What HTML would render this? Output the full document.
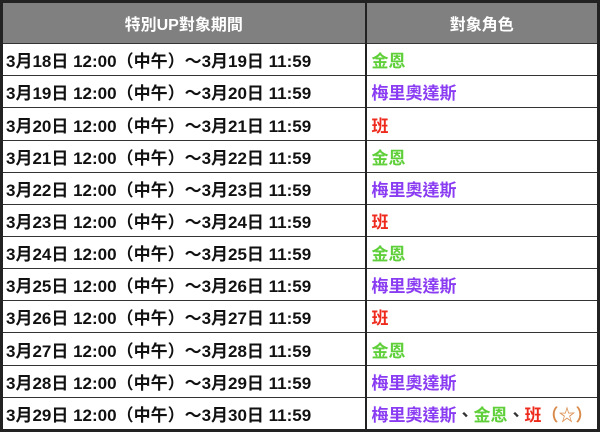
<!DOCTYPE html>
<html><head><meta charset="utf-8"><style>
html,body{margin:0;padding:0;background:#fff;}
table{position:absolute;left:0;top:0;width:600px;height:432px;border-collapse:collapse;border:3px solid #222;font-family:"Liberation Sans","Noto Sans CJK TC",sans-serif;font-weight:bold;font-size:17px;color:#111;table-layout:fixed;}
td,th{border:1px solid #333;padding:0 0 0 3px;text-align:left;white-space:nowrap;}
th{background:#808080;color:#fff;text-align:center;height:40px;font-size:16px;padding:0;}
th+th{border-left:2px solid #222;}
td+td{border-left:2px solid #222;padding-left:5px;}
tr.r td{height:31px;}
.g{color:#5fcf3a}.p{color:#8a3cf2}.r2{color:#ee2a1c}.o{color:#d98a4a}.k{color:#333}
</style></head><body>
<table>
<colgroup><col style="width:364px"><col></colgroup>
<tr><th>特別UP對象期間</th><th>對象角色</th></tr>
<tr class="r"><td>3月18日 12:00（中午）～3月19日 11:59</td><td class="g">金恩</td></tr>
<tr class="r"><td>3月19日 12:00（中午）～3月20日 11:59</td><td class="p">梅里奧達斯</td></tr>
<tr class="r"><td>3月20日 12:00（中午）～3月21日 11:59</td><td class="r2">班</td></tr>
<tr class="r"><td>3月21日 12:00（中午）～3月22日 11:59</td><td class="g">金恩</td></tr>
<tr class="r"><td>3月22日 12:00（中午）～3月23日 11:59</td><td class="p">梅里奧達斯</td></tr>
<tr class="r"><td>3月23日 12:00（中午）～3月24日 11:59</td><td class="r2">班</td></tr>
<tr class="r"><td>3月24日 12:00（中午）～3月25日 11:59</td><td class="g">金恩</td></tr>
<tr class="r"><td>3月25日 12:00（中午）～3月26日 11:59</td><td class="p">梅里奧達斯</td></tr>
<tr class="r"><td>3月26日 12:00（中午）～3月27日 11:59</td><td class="r2">班</td></tr>
<tr class="r"><td>3月27日 12:00（中午）～3月28日 11:59</td><td class="g">金恩</td></tr>
<tr class="r"><td>3月28日 12:00（中午）～3月29日 11:59</td><td class="p">梅里奧達斯</td></tr>
<tr class="r"><td>3月29日 12:00（中午）～3月30日 11:59</td><td><span class="p">梅里奧達斯</span><span class="k">、</span><span class="g">金恩</span><span class="k">、</span><span class="r2">班</span><span class="o">（☆）</span></td></tr>
</table>
</body></html>
